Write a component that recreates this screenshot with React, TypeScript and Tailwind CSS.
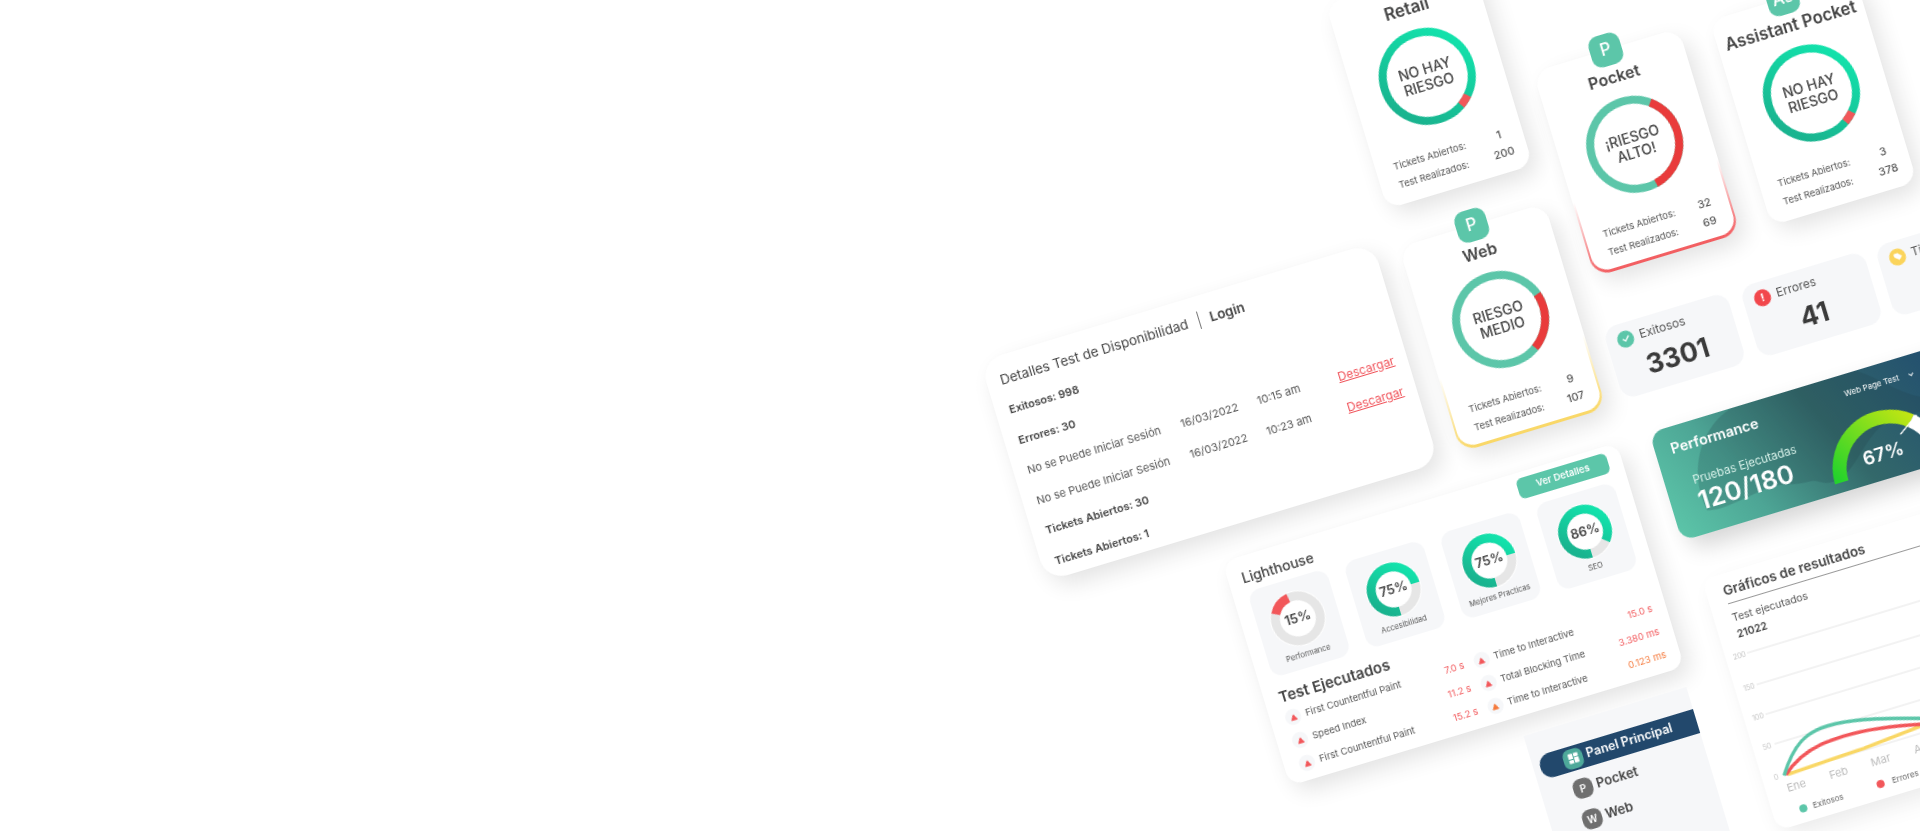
const font = "font-['Inter','Noto_Sans',sans-serif]";

type Accent = "none" | "red" | "yellow";

const accentStyles: Record<Accent, string> = {
  none: "bg-white",
  red: "bg-[linear-gradient(to_top,#f25c5f,#ffffff_36%)] px-[2px] pb-[3px]",
  yellow: "bg-[linear-gradient(to_top,#f9d765,#ffffff_36%)] px-[2px] pb-[3px]"
};

const cardShadow = "shadow-[6px_10px_22px_rgba(0,0,0,0.11),0_0_3px_rgba(0,0,0,0.03)]";

function Gradients() {
  return (
    <defs>
      <linearGradient id="ringGreen" x1="0.9" y1="0.1" x2="0.2" y2="0.9">
        <stop offset="0%" stopColor="#12e3ac" />
        <stop offset="100%" stopColor="#19b48f" />
      </linearGradient>
    </defs>
  );
}

function RingArc({ r, c, width, from, to, color }: { r: number; c: number; width: number; from: number; to: number; color: string }) {
  return (
    <circle
      cx={c}
      cy={c}
      r={r}
      fill="none"
      stroke={color}
      strokeWidth={width}
      pathLength={360}
      strokeDasharray={`${to - from} ${360 - (to - from)}`}
      strokeDashoffset={90 - from}
    />
  );
}

function RiskCard({
  left,
  top,
  icon,
  name,
  nameSize = "text-[16px]",
  lines,
  base,
  red,
  redColor,
  accent,
  tickets,
  tests
}: {
  left: string;
  top: string;
  icon: string;
  name: string;
  nameSize?: string;
  lines: string[];
  base: string;
  red: [number, number];
  redColor: string;
  accent: Accent;
  tickets: number;
  tests: number;
}) {
  return (
    <div className={`absolute ${left} ${top} h-[214px] w-[152px] rounded-[18px] ${cardShadow} ${accentStyles[accent]}`}>
      <div className="flex h-full flex-col items-center rounded-[16px] bg-white">
        <div className="-mt-[16px] mb-[1px] flex h-[32px] w-[32px] items-center justify-center rounded-[10px] bg-[#5cc6a9] text-[17px] font-medium text-white">
          {icon}
        </div>
        <div className={`h-[22px] whitespace-nowrap leading-[22px] font-semibold text-[#444] ${nameSize}`}>{name}</div>
        <div className="relative mt-[11px] h-[97px] w-[97px]">
          <svg viewBox="0 0 97 97" className="h-full w-full">
            <Gradients />
            <circle cx={48.5} cy={48.5} r={44.5} fill="none" stroke={base} strokeWidth={8} />
            <RingArc r={44.5} c={48.5} width={8} from={red[0]} to={red[1]} color={redColor} />
          </svg>
          <div className="absolute inset-0 flex flex-col items-center justify-center text-[14px] leading-[16px] font-medium text-[#444]">
            {lines.map((line) => (
              <span key={line}>{line}</span>
            ))}
          </div>
        </div>
        <div className="mt-[19px] grid w-full grid-cols-[1fr_24px] pr-[12px] pl-[18px] text-[9.5px] leading-[19px] text-[#555]">
          <span>Tickets Abiertos:</span>
          <span className="text-center text-[11px] font-medium">{tickets}</span>
          <span>Test Realizados:</span>
          <span className="text-center text-[11px] font-medium">{tests}</span>
        </div>
      </div>
    </div>
  );
}

function StatCard({ left, label, value, icon }: { left: string; label: string; value?: string; icon: React.ReactNode }) {
  return (
    <div className={`absolute ${left} top-[771px] h-[74px] w-[129px] rounded-[14px] bg-[#f6f7f9] pt-[7px]`}>
      <div className="flex h-[18px] items-center gap-[6px] pl-[11px] text-[12px] text-[#555]">
        {icon}
        <span>{label}</span>
      </div>
      <div className="mt-[7px] text-center text-[27px] leading-[32px] font-bold text-[#3a3a3a]">{value}</div>
    </div>
  );
}

function ScoreCard({ label, score, from, to, color }: { label: string; score: string; from: number; to: number; color: string }) {
  return (
    <div className="flex h-[90px] w-[82px] flex-col items-center rounded-[12px] bg-[#f6f7f9] pt-[12px]">
      <div className="relative h-[56px] w-[56px] rounded-full bg-white">
        <svg viewBox="0 0 56 56" className="h-full w-full">
          <Gradients />
          <circle cx={28} cy={28} r={22.5} fill="none" stroke="#e6e6e6" strokeWidth={9} />
          <RingArc r={22.5} c={28} width={9} from={from} to={to} color={color} />
        </svg>
        <div className="absolute inset-0 flex items-center justify-center text-[13px] font-semibold text-[#444]">{score}</div>
      </div>
      <div className="mt-[2px] text-[7.5px] leading-[14px] whitespace-nowrap text-[#555]">{label}</div>
    </div>
  );
}

function Metric({ label, value, color }: { label: string; value: string; color: string }) {
  return (
    <div className="flex h-[24px] items-center text-[9.5px] text-[#555]">
      <span className="mr-[5px] flex h-[16px] w-[16px] items-center justify-center rounded-full bg-[#f6f7f9]">
        <svg viewBox="0 0 8 8" className="h-[7px] w-[7px]">
          <path d="M4 1 L7.3 7 L0.7 7 Z" fill={color} stroke={color} strokeLinejoin="round" />
        </svg>
      </span>
      <span className="flex-1 whitespace-nowrap">{label}</span>
      <span className="whitespace-nowrap" style={{ color }}>{value}</span>
    </div>
  );
}

const rows = [
  { bold: true, a: "Exitosos: 998" },
  { bold: true, a: "Errores: 30" },
  { a: "No se Puede Iniciar Sesión", b: "16/03/2022", c: "10:15 am", d: "Descargar" },
  { a: "No se Puede Iniciar Sesión", b: "16/03/2022", c: "10:23 am", d: "Descargar" },
  { bold: true, a: "Tickets Abiertos: 30" },
  { bold: true, a: "Tickets Abiertos: 1" }
];

const metrics = [
  { label: "First Countentful Paint", value: "7.0 s", color: "#f2575a" },
  { label: "Time to Interactive", value: "15.0 s", color: "#f2575a" },
  { label: "Speed Index", value: "11.2 s", color: "#f2575a" },
  { label: "Total Blocking Time", value: "3.380 ms", color: "#f2575a" },
  { label: "First Countentful Paint", value: "15.2 s", color: "#f2575a" },
  { label: "Time to Interactive", value: "0.123 ms", color: "#f5793b" }
];

const gridLines = [
  { label: "200", y: 11 },
  { label: "150", y: 44 },
  { label: "100", y: 75 },
  { label: "50", y: 106 },
  { label: "0", y: 138 }
];

const months = [
  { label: "Ene", x: 31 },
  { label: "Feb", x: 75 },
  { label: "Mar", x: 119 },
  { label: "Abr", x: 163 }
];

export default function App() {
  return (
    <div className={`relative h-[831px] w-[1920px] overflow-hidden bg-white ${font}`}>
      <div className="absolute top-0 left-0 h-[1400px] w-[2000px] origin-top-left -translate-x-[2px] translate-y-[8px] -rotate-[16.8deg] blur-[0.5px]">
        <RiskCard left="left-[1272px]" top="top-[380px]" icon="R" name="Retail" nameSize="text-[17px]" lines={["NO HAY", "RIESGO"]} base="url(#ringGreen)" red={[132, 147]} redColor="#f2575a" accent="none" tickets={1} tests={200} />
        <RiskCard left="left-[1451px]" top="top-[505px]" icon="P" name="Pocket" lines={["¡RIESGO", "ALTO!"]} base="#5cc6a9" red={[37, 168]} redColor="#e93b3b" accent="red" tickets={32} tests={69} />
        <RiskCard left="left-[1635px]" top="top-[507px]" icon="As" name="Assistant Pocket" nameSize="text-[16.8px]" lines={["NO HAY", "RIESGO"]} base="url(#ringGreen)" red={[132, 147]} redColor="#f2575a" accent="none" tickets={3} tests={378} />
        <RiskCard left="left-[1272px]" top="top-[634px]" icon="P" name="Web" lines={["RIESGO", "MEDIO"]} base="#5cc6a9" red={[72, 146]} redColor="#e93b3b" accent="yellow" tickets={9} tests={107} />

        <div className={`absolute top-[622px] left-[838px] h-[230px] w-[410px] rounded-[22px] bg-white pt-[12px] pl-[14px] ${cardShadow}`}>
          <div className="flex h-[24px] items-center text-[13.5px] text-[#444]">
            <span>Detalles Test de Disponibilidad</span>
            <span className="mx-[11px] h-[18px] w-px bg-[#777]" />
            <span className="font-semibold">Login</span>
          </div>
          <div className="mt-[4px] grid grid-cols-[160px_80px_84px_1fr] text-[11px] leading-[31.6px] text-[#555]">
            {rows.map((row, index) =>
              row.b ? (
                <div key={index} className="contents">
                  <span>{row.a}</span>
                  <span>{row.b}</span>
                  <span>{row.c}</span>
                  <span className="text-[12px] text-[#f0535a] underline">{row.d}</span>
                </div>
              ) : (
                <span key={index} className="col-span-4 font-semibold text-[#444]">{row.a}</span>
              )
            )}
          </div>
        </div>

        <StatCard
          left="left-[1443px]"
          label="Exitosos"
          value="3301"
          icon={
            <span className="flex h-[17px] w-[17px] items-center justify-center rounded-full bg-[#5cc6a9]">
              <svg viewBox="0 0 12 12" className="h-[10px] w-[10px]">
                <path d="M2.5 6.2 L5 8.6 L9.5 3.6" fill="none" stroke="white" strokeWidth="1.6" strokeLinecap="round" strokeLinejoin="round" />
              </svg>
            </span>
          }
        />
        <StatCard
          left="left-[1586px]"
          label="Errores"
          value="41"
          icon={<span className="flex h-[17px] w-[17px] items-center justify-center rounded-full bg-[#f2474c] text-[11px] font-bold text-white">!</span>}
        />
        <StatCard
          left="left-[1727px]"
          label="Tickets"
          icon={
            <span className="flex h-[17px] w-[17px] items-center justify-center rounded-full bg-[#fbd45b]">
              <svg viewBox="0 0 12 12" className="h-[10px] w-[10px]">
                <path d="M2 2.5 H6.5 L10.5 6.5 L7 10 L2 6 Z" fill="white" stroke="white" strokeLinejoin="round" />
              </svg>
            </span>
          }
        />

        <div className="absolute top-[884px] left-[1458px] h-[113px] w-[320px] overflow-hidden rounded-[14px] bg-[linear-gradient(65deg,#5cc6a9_0%,#4da595_25%,#33686a_55%,#1f4a70_100%)] pt-[11px] pl-[16px] text-white shadow-[8px_12px_22px_rgba(0,0,0,0.16)]">
          <svg viewBox="0 0 320 113" className="absolute inset-0 h-full w-full">
            <defs>
              <linearGradient id="gaugeFill" gradientUnits="userSpaceOnUse" x1="174" y1="100" x2="258" y2="50">
                <stop offset="0%" stopColor="#25d32c" />
                <stop offset="100%" stopColor="#c4e612" />
              </linearGradient>
            </defs>
            <path d="M33 91 C26 55 45 12 85 0 L215 0 C238 14 252 40 285 50 L320 62 L320 66 C290 62 250 52 226 60 C200 70 185 100 162 100 C150 100 148 93 140 93 C120 92 110 85 97 87 C75 89 50 96 33 91 Z" fill="#1f3f4a" fillOpacity="0.22" />
            <g transform="translate(-4 3)">
              <path d="M174 100 A51 51 0 0 1 258 61" fill="none" stroke="url(#gaugeFill)" strokeWidth="14" />
              <path d="M258 61 A51 51 0 0 1 276 100" fill="none" stroke="white" strokeWidth="14" />
              <line x1="244" y1="71" x2="265" y2="57" stroke="white" strokeWidth="1.5" />
            </g>
          </svg>
          <div className="relative text-[14.5px] leading-[21px] font-semibold">Performance</div>
          <div className="relative mt-[17px] ml-[2px] w-[128px] text-center">
            <div className="text-[11.5px] leading-[18px] text-[#d8f2ea]">Pruebas Ejecutadas</div>
            <div className="-ml-[10px] text-[26px] leading-[26px] font-semibold">120/180</div>
          </div>
          <div className="absolute top-[74px] left-[195px] w-[46px] text-center text-[19px] leading-[28px] font-semibold">67%</div>
          <div className="absolute top-[12px] left-[198px] flex w-[80px] items-center gap-[9px] text-[8px] leading-[14px] whitespace-nowrap">
            <span>Web Page Test</span>
            <svg viewBox="0 0 8 8" className="h-[7px] w-[7px] shrink-0">
              <path d="M1.5 3 L4 5.5 L6.5 3" fill="none" stroke="white" strokeWidth="1.2" />
            </svg>
          </div>
        </div>

        <div className={`absolute top-[884px] left-[1012px] h-[234px] w-[412px] rounded-[14px] bg-white ${cardShadow}`}>
          <div className="flex h-[36px] justify-between pr-[14px] pl-[14px]">
            <span className="mt-[12px] text-[14px] leading-[20px] font-medium text-[#444]">Lighthouse</span>
            <span className="mt-[6px] flex h-[21px] w-[94px] items-center justify-center rounded-[6px] bg-[#5cc6a9] text-[9.5px] font-semibold text-white">Ver Detalles</span>
          </div>
          <div className="flex gap-[18px] pl-[15px]">
            <ScoreCard label="Performance" score="15%" from={297} to={351} color="#f2575a" />
            <ScoreCard label="Accesibilidad" score="75%" from={180} to={450} color="url(#ringGreen)" />
            <ScoreCard label="Mejores Practicas" score="75%" from={180} to={450} color="url(#ringGreen)" />
            <ScoreCard label="SEO" score="86%" from={180} to={490} color="url(#ringGreen)" />
          </div>
          <div className="mt-[11px] pl-[15px] text-[15px] leading-[20px] font-semibold text-[#444]">Test Ejecutados</div>
          <div className="grid grid-cols-2 gap-x-[10px] pr-[14px] pl-[15px]">
            {metrics.map((metric, index) => (
              <Metric key={index} label={metric.label} value={metric.value} color={metric.color} />
            ))}
          </div>
        </div>

        <div className="absolute top-[1138px] left-[1250px] h-[190px] w-[170px] bg-[#f6f7f9] pt-[23px]">
          <div className="ml-[7px] flex h-[25px] items-center rounded-l-[12px] bg-[#22486c] pl-[24px] text-[12.5px] font-semibold text-white">
            <span className="mr-[4px] flex h-[20px] w-[20px] items-center justify-center rounded-[7px] bg-[#4ea99a]">
              <svg viewBox="0 0 12 12" className="h-[11px] w-[11px]" fill="white">
                <rect x="0.5" y="0.5" width="5" height="6" rx="0.6" />
                <rect x="6.5" y="0.5" width="5" height="4" rx="0.6" />
                <rect x="0.5" y="7.5" width="5" height="4" rx="0.6" />
                <rect x="6.5" y="5.5" width="5" height="6" rx="0.6" />
              </svg>
            </span>
            Panel Principal
          </div>
          <div className="mt-[3px] pl-[32px] text-[13px] font-semibold text-[#444]">
            <div className="flex h-[32px] items-center gap-[4px]">
              <span className="flex h-[20px] w-[20px] items-center justify-center rounded-[8px] bg-[#6f6f6f] text-[10px] text-white">P</span>
              Pocket
            </div>
            <div className="flex h-[32px] items-center gap-[4px]">
              <span className="flex h-[20px] w-[20px] items-center justify-center rounded-[8px] bg-[#6f6f6f] text-[10px] text-white">W</span>
              Web
            </div>
          </div>
        </div>

        <div className="absolute top-[1040px] left-[1466px] h-[262px] w-[420px] rounded-[14px] bg-white pt-[6px] shadow-[6px_10px_22px_rgba(0,0,0,0.08)]">
          <div className="pl-[17px] text-[13.5px] leading-[22px] font-semibold text-[#444]">Gráficos de resultados</div>
          <div className="mt-[2px] ml-[18px] h-px bg-[#999]" />
          <div className="mt-[7px] pl-[18px] text-[10.5px] leading-[16px] text-[#555]">Test ejecutados</div>
          <div className="pl-[18px] text-[10.5px] leading-[18px] font-semibold text-[#444]">21022</div>
          <svg viewBox="0 0 420 190" className="absolute top-[72px] left-0 h-[190px] w-[420px]">
            {gridLines.map((line) => (
              <g key={line.label}>
                <text x="14" y={line.y + 2.5} textAnchor="middle" fontSize="7" fill="#c4c4c4">{line.label}</text>
                <line x1="22" y1={line.y} x2="420" y2={line.y} stroke="#e6e6e6" strokeWidth="1" />
              </g>
            ))}
            {months.map((month) => (
              <text key={month.label} x={month.x} y="156" textAnchor="middle" fontSize="11" fill="#bdbdbd">{month.label}</text>
            ))}
            <path d="M26 139 L107 136 L170 131 L220 126" fill="none" stroke="#f9d765" strokeWidth="3.5" />
            <path d="M24 139 C40 125 58 120 76 119 C100 117 130 120 170 130 L220 136" fill="none" stroke="#f2575a" strokeWidth="3.5" />
            <path d="M22 139 C40 112 55 104 78 104 C100 104 125 110 170 124 L220 132" fill="none" stroke="#5cc6a9" strokeWidth="3.5" />
            <circle cx="31" cy="176" r="4" fill="#5cc6a9" />
            <text x="41" y="178.5" fontSize="8" fill="#666">Exitosos</text>
            <circle cx="112" cy="175" r="4" fill="#f2575a" />
            <text x="124" y="178" fontSize="8" fill="#666">Errores</text>
          </svg>
        </div>
      </div>
    </div>
  );
}
